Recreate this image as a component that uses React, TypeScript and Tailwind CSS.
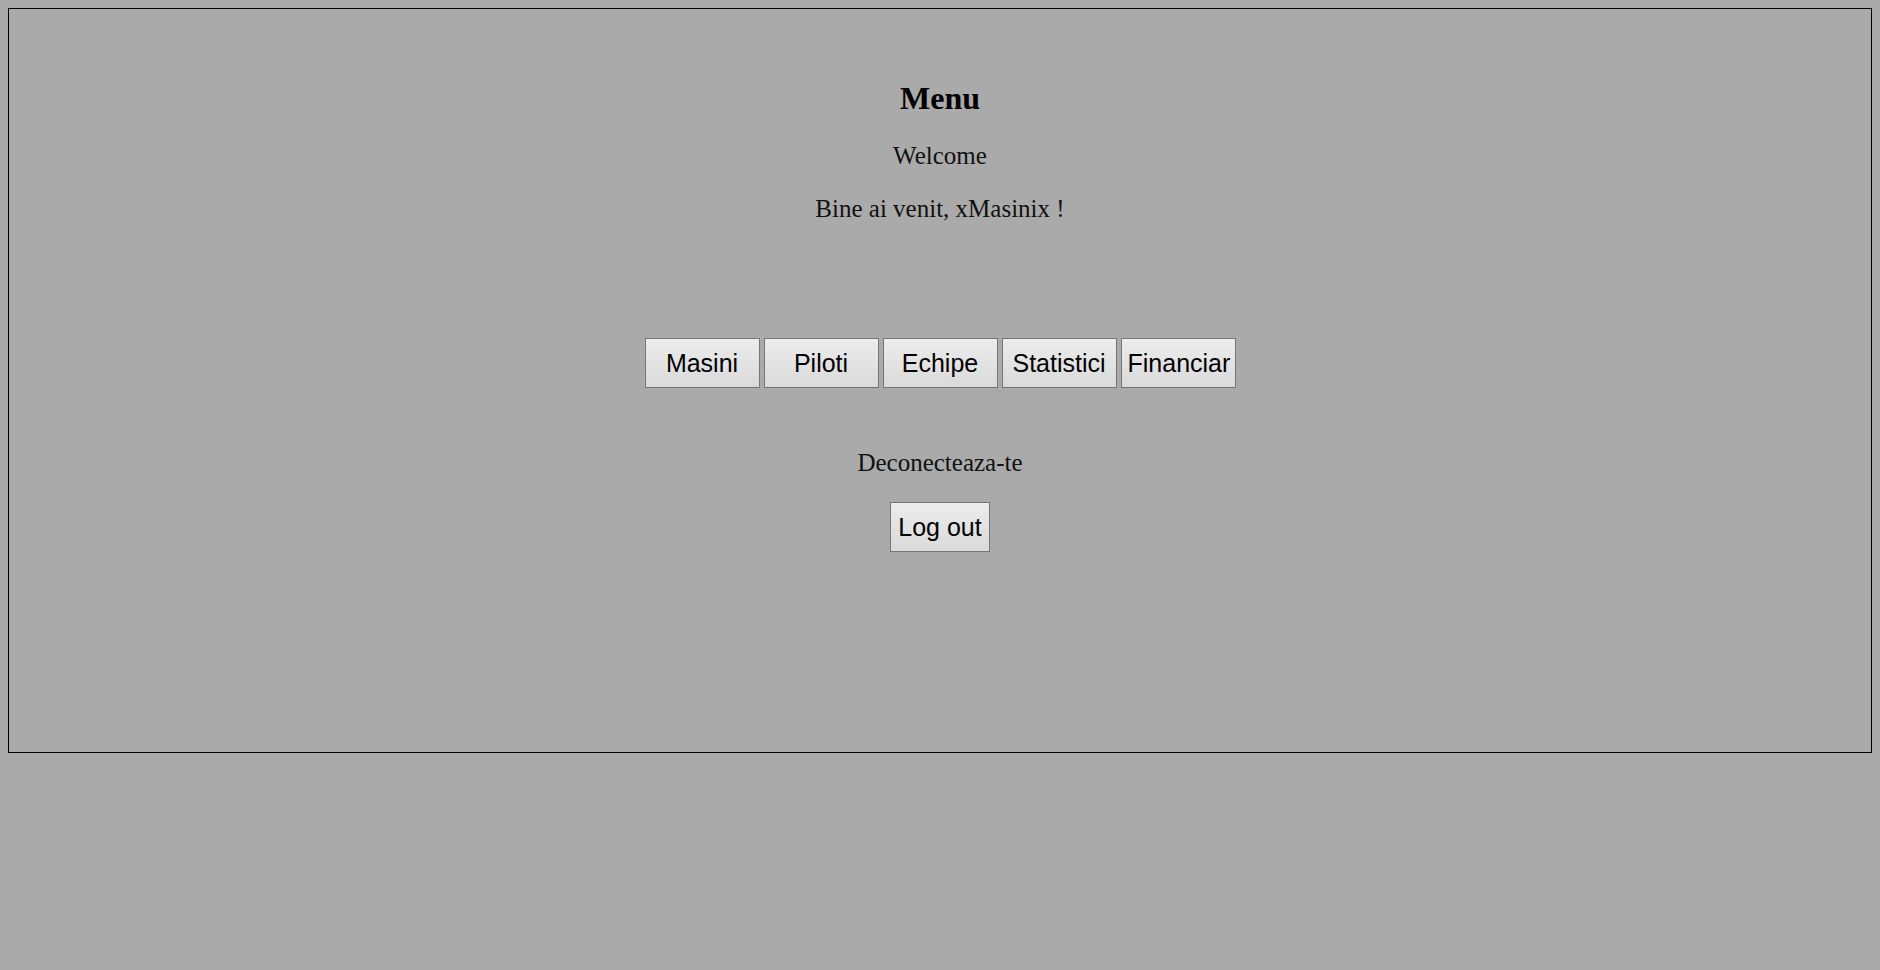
import React from "react";

const serif = { fontFamily: '"Liberation Serif", "Times New Roman", serif' };

function Btn({ label, w }: { label: string; w: string }) {
  return (
    <button
      className={`${w} h-[50px] flex items-center justify-start overflow-visible whitespace-nowrap border border-[#767676] bg-gradient-to-b from-[#ececec] to-[#dadada] px-[6px] text-[25px] leading-none text-black`}
      style={{ fontFamily: '"Liberation Sans", Arial, sans-serif' }}
    >
      <span className="flex-1 text-center">{label}</span>
    </button>
  );
}

export default function App() {
  return (
    <div className="min-h-[970px] bg-[#aaaaaa] p-[8px]">
      <div
        className="h-[745px] border border-black text-center text-[#111] pt-[73px]"
        style={serif}
      >
        <h1 className="text-[32px] font-bold leading-none text-black">Menu</h1>
        <p className="mt-[29px] text-[25px] leading-none">Welcome</p>
        <p className="mt-[28px] text-[25px] leading-none">Bine ai venit, xMasinix !</p>
        <div className="mt-[117px] flex justify-center gap-[4px]">
          <Btn label="Masini" w="w-[115px]" />
          <Btn label="Piloti" w="w-[115px]" />
          <Btn label="Echipe" w="w-[115px]" />
          <Btn label="Statistici" w="w-[115px]" />
          <Btn label="Financiar" w="w-[115px]" />
        </div>
        <p className="mt-[62px] text-[25px] leading-none">Deconecteaza-te</p>
        <div className="mt-[27px] flex justify-center">
          <Btn label="Log out" w="w-[100px]" />
        </div>
      </div>
    </div>
  );
}
